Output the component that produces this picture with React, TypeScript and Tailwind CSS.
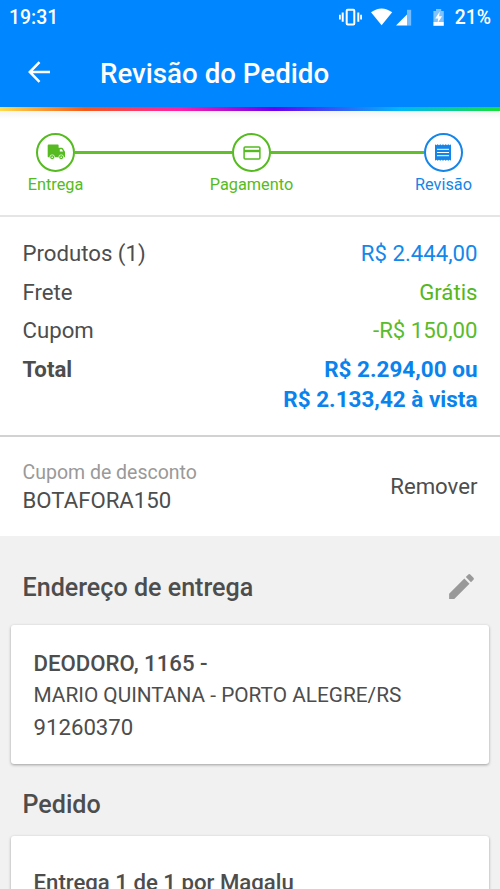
import React from "react";

function StatusIcons() {
  return (
    <svg width="110" height="24" viewBox="0 0 110 24" fill="white">
      <rect x="7.700" y="4.800" width="7.600" height="14.600" rx="1" fill="none" stroke="white" strokeWidth="2" />
      <path d="M2.700 7.500h2v9.200h-2zM0 9.700h1.800v4.800H0zM18.300 7.500h2v9.200h-2zM21.200 9.700H23v4.800h-1.800z" />
      <path d="M32 7.200Q42.600 -.4 53.200 7.200L42.600 20.300z" />
      <path d="M68 4.800v15.800h4.200V4.800z" opacity=".45" />
      <path d="M57 20.600L68 9.400V20.600z" />
      <path d="M94.400 6H97V4h5.200v2h2.600v11H94.400z" opacity=".5" />
      <path d="M94.400 17h10.400v3.800H94.400z" />
      <path d="M100.800 6.600l-4.600 6.900h3l-.7 4.700 4.600-6.900h-3z" />
    </svg>
  );
}

function TruckIcon() {
  return (
    <svg width="19" height="17" viewBox="0 0 19 17" fill="currentColor" className="ml-[2px]">
      <path fillRule="evenodd" d="M1.600 .5h9.200c.5 0 .8.300.8.800v2.500h3.200c.5 0 .9.200 1.200.700l1.700 2.800c.2.300.3.600.3.900v4.200c0 .6-.4.900-.9.900H1.600c-.5 0-.9-.4-.9-.9V1.400C.7.900 1.100.5 1.600.5zM12.800 5.300v2.300h3.400l-1.400-2.300z" />
      <circle cx="5.200" cy="13.200" r="2.400" stroke="white" strokeWidth=".7" />
      <circle cx="14.200" cy="13.200" r="2.400" stroke="white" strokeWidth=".7" />
      <circle cx="5.200" cy="13.200" r=".8" fill="white" />
      <circle cx="14.200" cy="13.200" r=".8" fill="white" />
    </svg>
  );
}

function CardIcon() {
  return (
    <svg width="18" height="14" viewBox="0 0 18 14" fill="none" stroke="currentColor">
      <rect x="1.100" y="1.100" width="15.800" height="11.800" rx="1" strokeWidth="1.500" />
      <path d="M1 5h16" strokeWidth="2.400" />
    </svg>
  );
}

function ReceiptIcon() {
  return (
    <svg width="16" height="17" viewBox="0 0 16 17" className="mr-px">
      <path fill="currentColor" d="M0 .2l1.300 1 1.300-1 1.400 1 1.300-1 1.300 1L8 .2l1.300 1 1.400-1 1.300 1 1.300-1 1.400 1L16 .2v16.600l-1.300-1-1.400 1-1.300-1-1.300 1-1.400-1-1.300 1-1.400-1-1.300 1-1.300-1-1.400 1-1.300-1-1.300 1z" />
      <path d="M2 5.300h12M2 8.500h12M2 11.700h12" stroke="white" strokeWidth="1" />
    </svg>
  );
}

function Step({ label, color, children }: { label: string; color: string; children: React.ReactNode }) {
  return (
    <div className={`flex w-[39px] shrink-0 flex-col items-center ${color}`}>
      <div className="flex size-[39px] shrink-0 items-center justify-center rounded-full border-2 border-current">{children}</div>
      <span className="mt-[3px] whitespace-nowrap text-[16.300px] leading-[20px]">{label}</span>
    </div>
  );
}

function Row({ label, value, color }: { label: string; value: string; color: string }) {
  return (
    <div className="flex h-[38.400px] items-center justify-between">
      <span>{label}</span>
      <span className={color}>{value}</span>
    </div>
  );
}

export default function App() {
  return (
    <div className="flex h-[889px] w-[500px] flex-col overflow-hidden bg-[#f1f1f1] font-[Roboto,sans-serif] text-[22.2px] text-[#4d4d4d]">
      <header className="h-[107px] shrink-0 bg-[#0086ff] text-white">
        <div className="flex h-[35px] items-center justify-between pr-[9px] pl-[9px] text-[19.400px] font-medium">
          <span>19:31</span>
          <div className="flex items-center gap-[6px]">
            <StatusIcons />
            <span>21%</span>
          </div>
        </div>
        <div className="flex h-[76px] items-center pl-[28px]">
          <svg width="23" height="22" viewBox="0 0 23 22" fill="none" stroke="white" strokeWidth="2.500" className="mb-[2px]">
            <path d="M22 11H2M11.500 1.200L1.800 11l9.700 9.800" />
          </svg>
          <h1 className="mt-px ml-[49px] text-[27.700px] font-medium">Revisão do Pedido</h1>
        </div>
      </header>
      <div className="h-[4px] shrink-0 bg-[linear-gradient(90deg,#fcdc50_0%,#f45a18_17%,#ff20a8_36%,#6a00f0_55%,#00b8f8_80%,#18e038_100%)]" />
      <section className="flex h-[106px] shrink-0 items-start border-b-2 border-[#e5e5e5] bg-white bg-[linear-gradient(180deg,#f3f3f3,#ffffff_8px)] pt-[22px] pr-[37px] pl-[36px]">
        <Step label="Entrega" color="text-[#55bb20]"><TruckIcon /></Step>
        <div className="mt-[18px] h-[3px] w-[157px] bg-[#63be2c]" />
        <Step label="Pagamento" color="text-[#55bb20]"><CardIcon /></Step>
        <div className="mt-[18px] h-[3px] flex-1 bg-[#63be2c]" />
        <Step label="Revisão" color="text-[#1585e8]"><ReceiptIcon /></Step>
      </section>
      <section className="h-[220px] shrink-0 border-b-2 border-[#d2d2d2] bg-white px-[22.500px] pt-[17.600px]">
        <Row label="Produtos (1)" value="R$ 2.444,00" color="text-[#1387ea]" />
        <Row label="Frete" value="Grátis" color="text-[#55b71c]" />
        <Row label="Cupom" value="-R$ 150,00" color="text-[#5abb2d]" />
        <div className="flex justify-between pt-[4.400px] font-bold leading-[30px]">
          <span>Total</span>
          <span className="text-right text-[22.500px] text-[#0b83ed]">R$ 2.294,00 ou<br />R$ 2.133,42 à vista</span>
        </div>
      </section>
      <section className="flex h-[99px] shrink-0 items-center justify-between bg-white px-[22.500px]">
        <div className="flex flex-col">
          <span className="text-[19.500px] leading-[28px] text-[#999]">Cupom de desconto</span>
          <span className="-mt-px leading-[28px]">BOTAFORA150</span>
        </div>
        <span>Remover</span>
      </section>
      <main className="flex flex-col px-[11px]">
        <div className="flex h-[89px] items-center justify-between pt-[13px] pr-[12px] pl-[11.500px]">
          <h2 className="mt-[2px] text-[25.100px] font-medium">Endereço de entrega</h2>
          <svg width="33" height="33" viewBox="0 0 24 24" fill="#999" className="mr-[-1px] mb-[2px]">
            <path d="M3 17.250V21h3.750L17.810 9.940l-3.750-3.750L3 17.250zM20.710 7.040a1 1 0 0 0 0-1.410l-2.340-2.340a1 1 0 0 0-1.410 0l-1.830 1.830 3.750 3.750 1.830-1.830z" />
          </svg>
        </div>
        <div className="flex h-[139px] flex-col rounded-[3px] bg-white px-[22.500px] pt-[22px] leading-[32px] shadow-[0_1px_3px_rgba(0,0,0,.35)]">
          <span className="font-medium">DEODORO, 1165 -</span>
          <span className="pt-px text-[20.800px] leading-[31px]">MARIO QUINTANA - PORTO ALEGRE/RS</span>
          <span>91260370</span>
        </div>
        <h2 className="flex h-[72px] items-center pt-[9px] pl-[11.500px] text-[25.100px] font-medium">Pedido</h2>
        <div className="h-[100px] rounded-[3px] bg-white px-[22.500px] pt-[30px] leading-[32px] shadow-[0_1px_3px_rgba(0,0,0,.35)]">
          <span className="font-medium">Entrega 1 de 1 por Magalu</span>
        </div>
      </main>
    </div>
  );
}
